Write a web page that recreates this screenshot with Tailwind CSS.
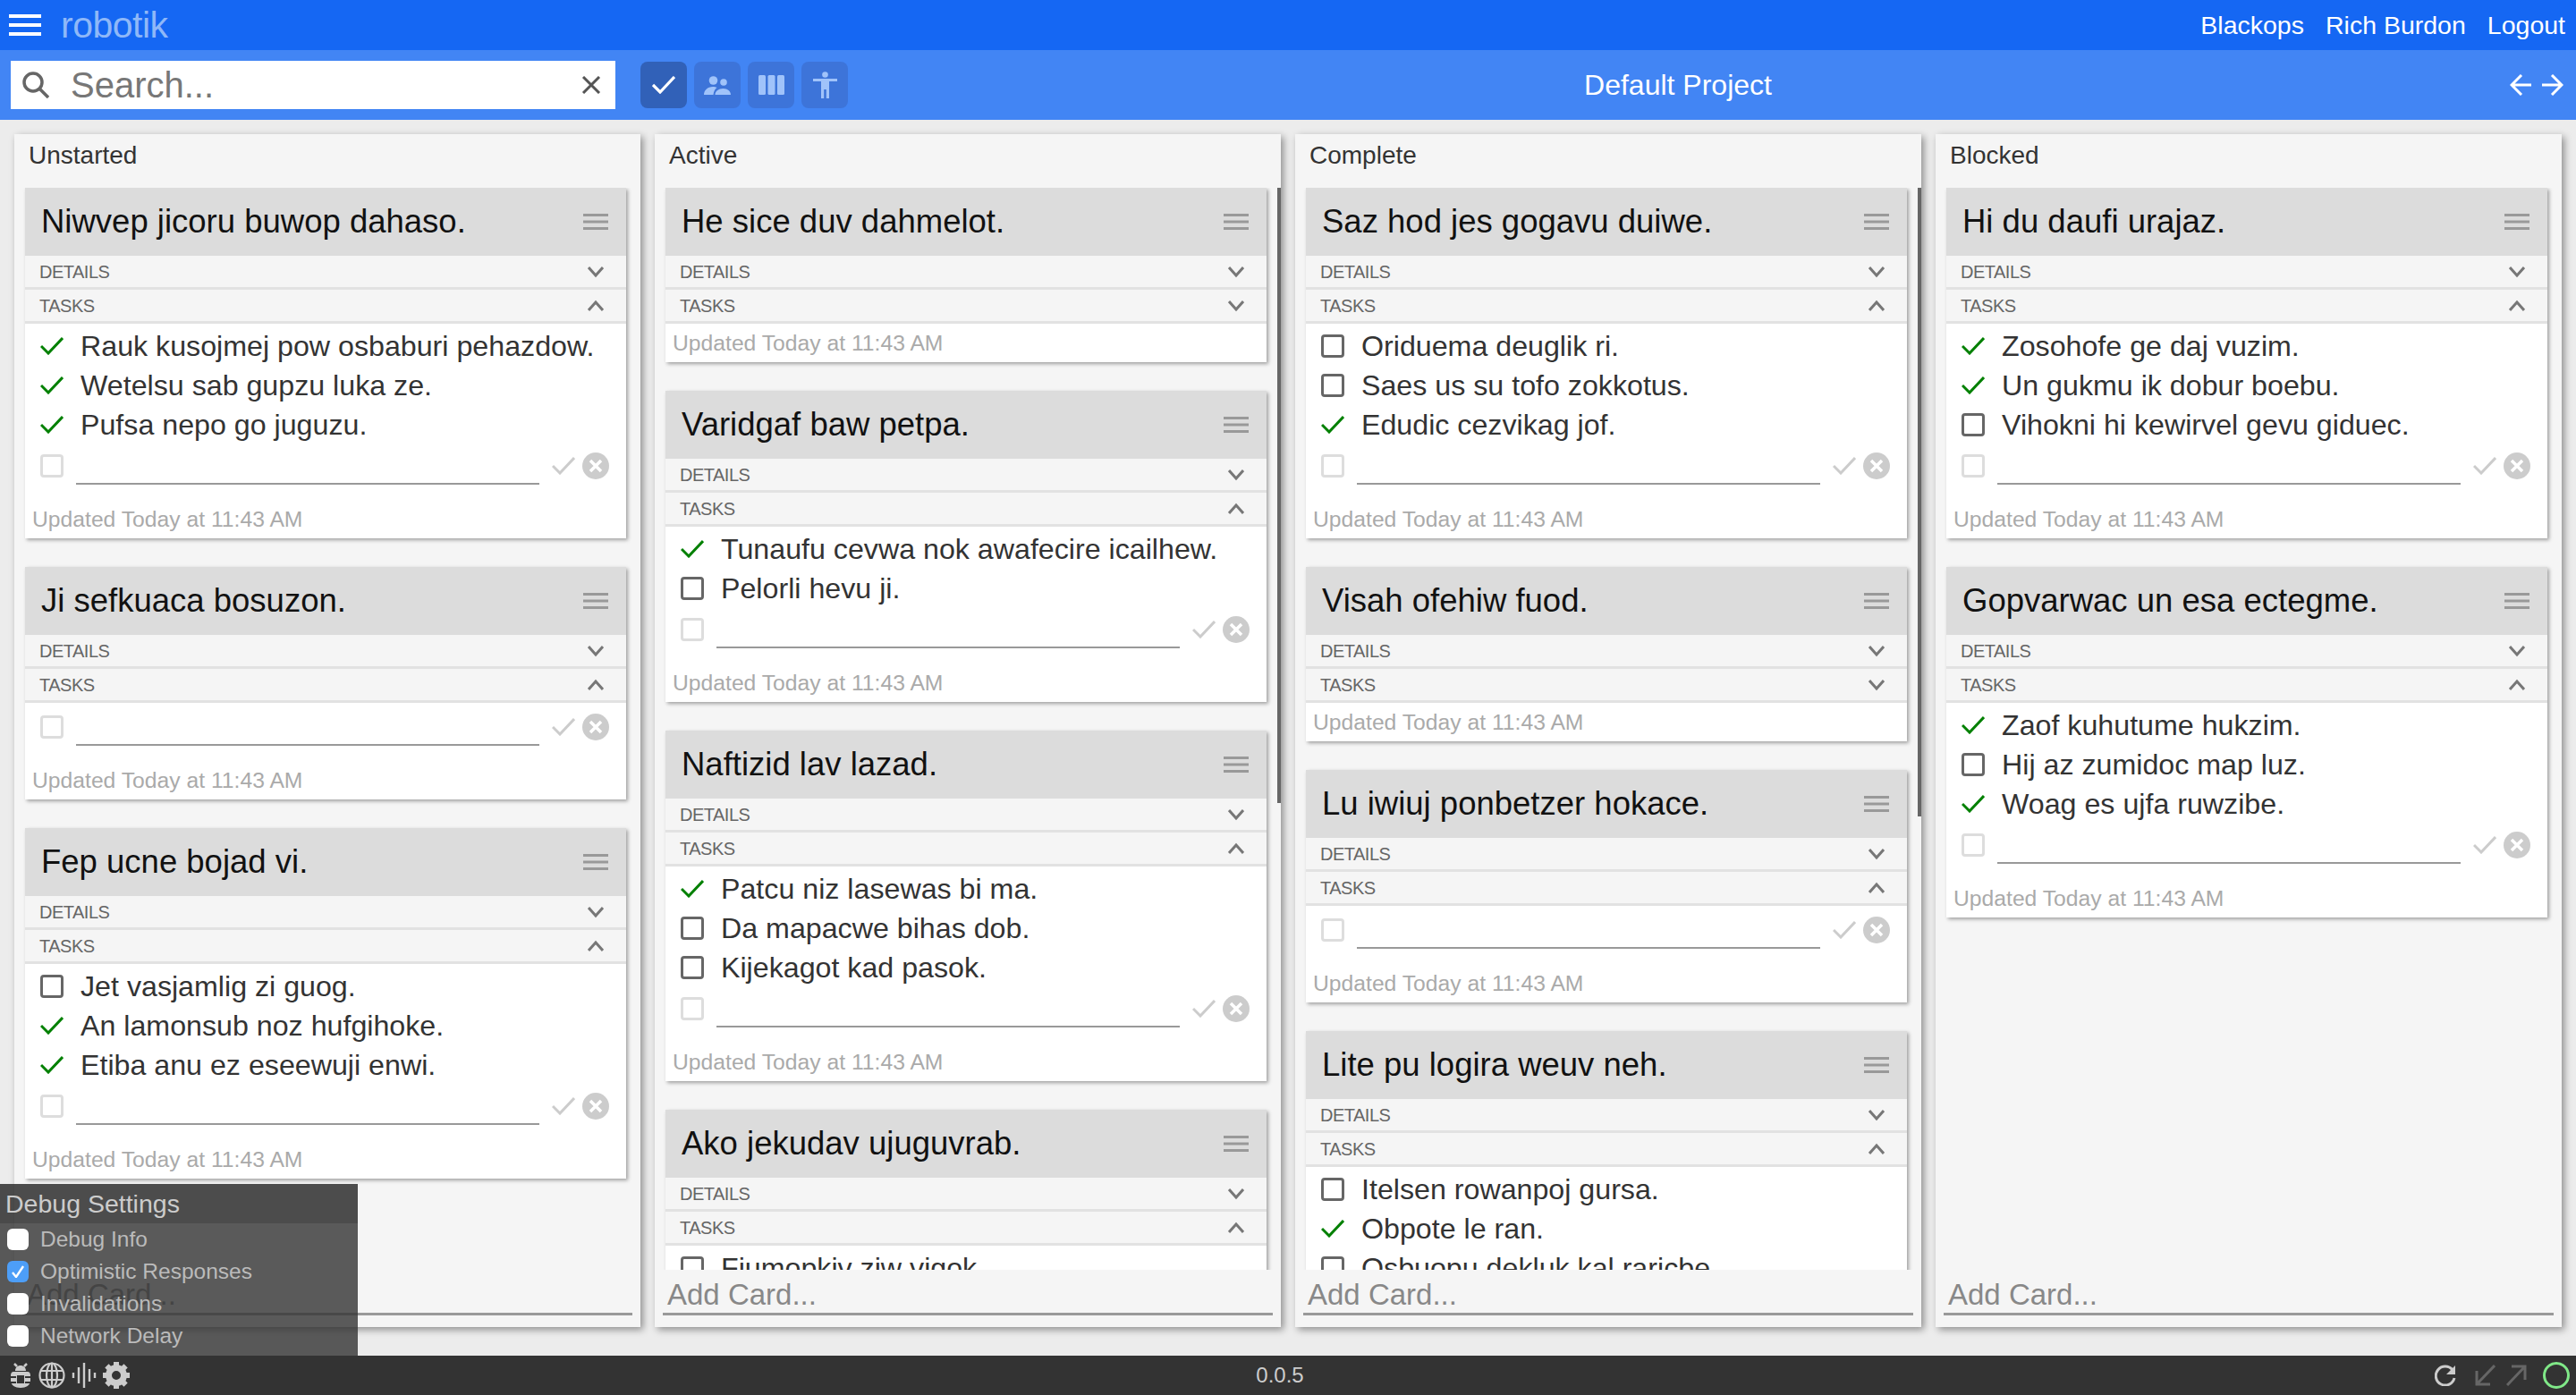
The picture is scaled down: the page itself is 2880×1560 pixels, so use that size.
<!DOCTYPE html>
<html lang="en">
<head>
  <meta charset="UTF-8">
  <title>robotik</title>
  <script src="https://cdn.jsdelivr.net/npm/@tailwindcss/browser@4"></script>
</head>
<body class="h-[1560px] w-[2880px] overflow-hidden bg-[#ececec] font-['Liberation_Sans',Arial,sans-serif]">

  <div class="relative flex h-full flex-col">
    <!-- top bar -->
    <header class="flex h-[56px] shrink-0 items-center bg-[#1567f3] pl-[10px] pr-[12px] text-white">
      <svg class="h-[24px] w-[36px]" viewBox="0 0 36 24" fill="#fff"><rect y="0" width="36" height="4"/><rect y="10" width="36" height="4"/><rect y="20" width="36" height="4"/></svg>
      <span class="ml-[22px] text-[41px] leading-none tracking-[-0.5px] text-[#8fb8f8]">robotik</span>
      <nav class="ml-auto flex gap-[24px] text-[28.5px]">
        <span>Blackops</span><span>Rich Burdon</span><span>Logout</span>
      </nav>
    </header>

    <!-- project bar -->
    <div class="flex h-[78px] shrink-0 items-center bg-[#4285f4] pl-[12px] pr-[14px]">
      <div class="flex h-[54px] w-[676px] items-center bg-white pl-[13px] pr-[16px] text-[40px] text-[#777]">
        <svg class="h-[30px] w-[30px]" viewBox="0 0 30 30" fill="none" stroke="#666" stroke-width="3.5"><circle cx="12" cy="12" r="10"/><path d="M19 19l10 10"/></svg>
        <span class="ml-[24px]">Search...</span>
        <svg class="ml-auto h-[20px] w-[22px]" viewBox="0 0 22 20" fill="none" stroke="#555" stroke-width="3"><path d="M2 1l18 18M20 1L2 19"/></svg>
      </div>
      <div class="ml-[28px] flex gap-[8px]">
        <div class="flex h-[52px] w-[52px] items-center justify-center rounded-[8px] bg-[#3161b8]">
          <svg class="h-[20px] w-[26px]" viewBox="0 0 26 20" fill="none" stroke="#fff" stroke-width="3.2"><path d="M1 10l8 8L25 1"/></svg>
        </div>
        <div class="flex h-[52px] w-[52px] items-center justify-center rounded-[8px] bg-[#3d74d9]">
          <svg class="h-[21px] w-[30px]" viewBox="0 0 30 21" fill="#a0c3fa"><circle cx="10.5" cy="5" r="4.8"/><circle cx="22" cy="7" r="3.8"/><path d="M0 21c0-5 4-9 10-9 2 0 3 .4 4.5 1-2 1.5-3.5 4-4 8zM12.5 21c0-4 4-7 9-7s8.5 3 8.5 7z"/></svg>
        </div>
        <div class="flex h-[52px] w-[52px] items-center justify-center rounded-[8px] bg-[#3d74d9]">
          <svg class="h-[22px] w-[29px]" viewBox="0 0 29 22" fill="#a0c3fa"><rect x="0" y="0" width="8" height="22" rx="1.5"/><rect x="10.5" y="0" width="8" height="22" rx="1.5"/><rect x="21" y="0" width="8" height="22" rx="1.5"/></svg>
        </div>
        <div class="flex h-[52px] w-[52px] items-center justify-center rounded-[8px] bg-[#3d74d9]">
          <svg class="h-[30px] w-[27px]" viewBox="0 0 27 30" fill="#a0c3fa"><circle cx="13.5" cy="3.5" r="3.3"/><path d="M0 8h27v3h-9v19h-3.2V20h-2.6v10H9V11H0z"/></svg>
        </div>
      </div>
      <div class="flex-1 pr-[2px] text-center text-[32px] text-white">Default Project</div>
      <div class="flex gap-[12px]">
        <svg class="h-[24px] w-[24px]" viewBox="0 0 24 24" fill="none" stroke="#fff" stroke-width="3"><path d="M24 12H2M13 1L2 12l11 11"/></svg>
        <svg class="h-[24px] w-[24px]" viewBox="0 0 24 24" fill="none" stroke="#fff" stroke-width="3"><path d="M0 12h22M11 1l11 11-11 11"/></svg>
      </div>
    </div>

    <!-- board -->
    <main id="board" class="flex min-h-0 flex-1 gap-[16px] px-[16px] pb-[32px] pt-[16px]"></main>

    <!-- status bar -->
    <footer class="relative flex h-[44px] shrink-0 items-center justify-between bg-[#333] pl-[10px] pr-[7px]">
      <div class="flex items-center gap-[7px]">
        <svg class="h-[28px] w-[26px]" viewBox="0 0 26 28" fill="#ccc"><path d="M7 9c0-4 3-6 6-6s6 2 6 6zM5 10h16c2 0 3 2 3 4v6c0 5-5 8-11 8S2 25 2 20v-6c0-2 1-4 3-4z"/><path d="M6 1l3 3M20 1l-3 3" stroke="#ccc" stroke-width="2.5"/><path d="M2 16h6M18 16h6M2 22h6M18 22h6" stroke="#333" stroke-width="2"/><path d="M9 14h8v9H9z" fill="#333"/></svg>
        <svg class="h-[30px] w-[30px]" viewBox="0 0 30 30" fill="none" stroke="#ccc" stroke-width="2.2"><circle cx="15" cy="15" r="13.5"/><ellipse cx="15" cy="15" rx="6" ry="13.5"/><path d="M15 1v28M2 10h26M2 20h26"/></svg>
        <svg class="h-[30px] w-[28px]" viewBox="0 0 28 30" fill="none" stroke="#ccc" stroke-width="2.4"><path d="M2 12v6M8 6v18M14 1v28M20 8v14M26 12v6"/></svg>
        <svg class="h-[30px] w-[30px]" viewBox="0 0 30 30" fill="none" stroke="#ccc"><circle cx="15" cy="15" r="8.5" stroke-width="7"/><path d="M15 0v6M15 24v6M0 15h6M24 15h6M4.4 4.4l4.2 4.2M21.4 21.4l4.2 4.2M25.6 4.4l-4.2 4.2M8.6 21.4l-4.2 4.2" stroke-width="6"/></svg>
      </div>
      <div class="absolute left-[1400px] w-[62px] text-center text-[24px] text-[#ccc]">0.0.5</div>
      <div class="flex items-center">
        <svg class="h-[24px] w-[24px]" viewBox="0 0 24 24" fill="none" stroke="#ccc" stroke-width="3"><path d="M20 6a10.5 10.5 0 1 0 2 9"/><path d="M23 1v10H13z" fill="#ccc" stroke="none"/></svg>
        <svg class="ml-[21px] h-[24px] w-[23px]" viewBox="0 0 23 24" fill="none" stroke="#666" stroke-width="3"><path d="M22 1L2 22M2 7v15h15"/></svg>
        <svg class="ml-[12px] h-[24px] w-[23px]" viewBox="0 0 23 24" fill="none" stroke="#666" stroke-width="3"><path d="M1 23L21 2M6 2h15v15"/></svg>
        <svg class="ml-[18px] h-[30px] w-[30px]" viewBox="0 0 30 30" fill="none" stroke="#80e888" stroke-width="3"><circle cx="15" cy="15" r="13.5"/></svg>
      </div>
    </footer>

    <!-- debug settings, floats over the first column -->
    <div class="absolute bottom-[44px] left-0 w-[400px] bg-[#333]/80 text-[#ccc]">
      <div class="flex h-[44px] items-center bg-black/15 pl-[6px] text-[28.5px]">Debug Settings</div>
      <div class="flex h-[148px] flex-col">
        <label class="flex h-[36px] items-center gap-[13px] pl-[8px] text-[24.5px] text-[#bbb]"><span class="h-[24px] w-[24px] rounded-[6px] bg-white"></span>Debug Info</label>
        <label class="flex h-[36px] items-center gap-[13px] pl-[8px] text-[24.5px] text-[#bbb]"><span class="flex h-[24px] w-[24px] items-center justify-center rounded-[6px] bg-[#4d9ef7]"><svg class="h-[14px] w-[14px]" viewBox="0 0 14 14" fill="none" stroke="#fff" stroke-width="2.4"><path d="M1 8l4 5 8-12"/></svg></span>Optimistic Responses</label>
        <label class="flex h-[36px] items-center gap-[13px] pl-[8px] text-[24.5px] text-[#bbb]"><span class="h-[24px] w-[24px] rounded-[6px] bg-white"></span>Invalidations</label>
        <label class="flex h-[36px] items-center gap-[13px] pl-[8px] text-[24.5px] text-[#bbb]"><span class="h-[24px] w-[24px] rounded-[6px] bg-white"></span>Network Delay</label>
      </div>
    </div>
  </div>

  <script>
    // [title, tasks open?, tasks] where a task is [text, done]
    const columns = [
      { name: 'Unstarted', cards: [
        ['Niwvep jicoru buwop dahaso.', true, [['Rauk kusojmej pow osbaburi pehazdow.', 1], ['Wetelsu sab gupzu luka ze.', 1], ['Pufsa nepo go juguzu.', 1]]],
        ['Ji sefkuaca bosuzon.', true, []],
        ['Fep ucne bojad vi.', true, [['Jet vasjamlig zi guog.', 0], ['An lamonsub noz hufgihoke.', 1], ['Etiba anu ez eseewuji enwi.', 1]]],
      ]},
      { name: 'Active', scroll: 688, cards: [
        ['He sice duv dahmelot.', false, []],
        ['Varidgaf baw petpa.', true, [['Tunaufu cevwa nok awafecire icailhew.', 1], ['Pelorli hevu ji.', 0]]],
        ['Naftizid lav lazad.', true, [['Patcu niz lasewas bi ma.', 1], ['Da mapacwe bihas dob.', 0], ['Kijekagot kad pasok.', 0]]],
        ['Ako jekudav ujuguvrab.', true, [['Fiumopkiv ziw vigok.', 0]]],
      ]},
      { name: 'Complete', scroll: 703, cards: [
        ['Saz hod jes gogavu duiwe.', true, [['Oriduema deuglik ri.', 0], ['Saes us su tofo zokkotus.', 0], ['Edudic cezvikag jof.', 1]]],
        ['Visah ofehiw fuod.', false, []],
        ['Lu iwiuj ponbetzer hokace.', true, []],
        ['Lite pu logira weuv neh.', true, [['Itelsen rowanpoj gursa.', 0], ['Obpote le ran.', 1], ['Osbuopu dekluk kal raricbe.', 0]]],
      ]},
      { name: 'Blocked', cards: [
        ['Hi du daufi urajaz.', true, [['Zosohofe ge daj vuzim.', 1], ['Un gukmu ik dobur boebu.', 1], ['Vihokni hi kewirvel gevu giduec.', 0]]],
        ['Gopvarwac un esa ectegme.', true, [['Zaof kuhutume hukzim.', 1], ['Hij az zumidoc map luz.', 0], ['Woag es ujfa ruwzibe.', 1]]],
      ]},
    ];

    const chevron = (open) => `<svg class="h-[14px] w-[18px]" viewBox="0 0 18 14" fill="none" stroke="#777" stroke-width="3"><path d="${open ? 'M1 12l8-9 8 9' : 'M1 2l8 9 8-9'}"/></svg>`;

    const section = (label, open) => `
      <div class="flex h-[38px] items-center justify-between border-b-[3px] border-[#e2e2e2] bg-[#f5f5f5] pl-[16px] pr-[25px] text-[20px] tracking-[-0.5px] text-[#666]">
        <span class="pt-[1px]">${label}</span>${chevron(open)}
      </div>`;

    const taskRow = ([text, done]) => `
      <div class="flex h-[44px] items-center">
        <span class="flex w-[26px] shrink-0 items-center justify-center">${done
          ? '<svg class="h-[20px] w-[26px]" viewBox="0 0 26 20" fill="none" stroke="#008000" stroke-width="3"><path d="M1 10l8 8L25 1"/></svg>'
          : '<span class="h-[26px] w-[26px] rounded-[4px] border-[3px] border-[#666]"></span>'}</span>
        <span class="ml-[19px] whitespace-nowrap text-[32.2px] text-[#333]">${text}</span>
      </div>`;

    const newTask = `
      <div class="flex h-[48px] items-center">
        <span class="h-[26px] w-[26px] shrink-0 rounded-[4px] border-[3px] border-[#ddd]"></span>
        <span class="ml-[14px] h-[44px] w-[518px] translate-y-[-1px] border-b-2 border-[#999]"></span>
        <svg class="ml-[14px] h-[20px] w-[26px]" viewBox="0 0 26 20" fill="none" stroke="#ccc" stroke-width="3"><path d="M1 10l8 8L25 1"/></svg>
        <svg class="ml-[8px] h-[30px] w-[30px]" viewBox="0 0 30 30"><circle cx="15" cy="15" r="15" fill="#ccc"/><path d="M9 9l12 12M21 9L9 21" stroke="#fff" stroke-width="3.5"/></svg>
      </div>`;

    const card = ([title, open, tasks]) => `
      <div class="mb-[32px] w-[672px] bg-white shadow-[2px_2px_4px_rgba(0,0,0,0.35)]">
        <div class="flex h-[76px] items-center justify-between bg-[#dcdcdc] pl-[18px] pr-[20px]">
          <span class="text-[36.5px] text-[#111]">${title}</span>
          <svg class="h-[18px] w-[28px]" viewBox="0 0 28 18" fill="#999"><rect width="28" height="3"/><rect y="7.5" width="28" height="3"/><rect y="15" width="28" height="3"/></svg>
        </div>
        ${section('DETAILS', false)}
        ${section('TASKS', open)}
        ${open ? `<div class="pb-[14px] pl-[17px] pt-[3px]">${tasks.map(taskRow).join('')}${newTask}</div>` : ''}
        <div class="flex h-[43px] items-center pl-[8px] text-[24.7px] text-[#aaa]">Updated Today at 11:43 AM</div>
      </div>`;

    document.getElementById('board').innerHTML = columns.map((col) => `
      <section class="flex w-[700px] shrink-0 flex-col bg-[#f5f5f5] shadow-[3px_3px_8px_rgba(0,0,0,0.4)]">
        <div class="mb-[12px] flex h-[48px] shrink-0 items-center pl-[16px] text-[28px] text-[#333]">${col.name}</div>
        <div class="relative h-[1210px] shrink-0 overflow-hidden pl-[12px]">
          ${col.cards.map(card).join('')}
          ${col.scroll ? `<div class="absolute right-0 top-0 w-[4px] bg-[#666]" style="height:${col.scroll}px"></div>` : ''}
        </div>
        <div class="mx-[9px] flex h-[51px] shrink-0 items-center border-b-[3px] border-[#999] pl-[5px] pt-[8px] text-[33px] text-[#888]">Add Card...</div>
      </section>`).join('');
  </script>
</body>
</html>
